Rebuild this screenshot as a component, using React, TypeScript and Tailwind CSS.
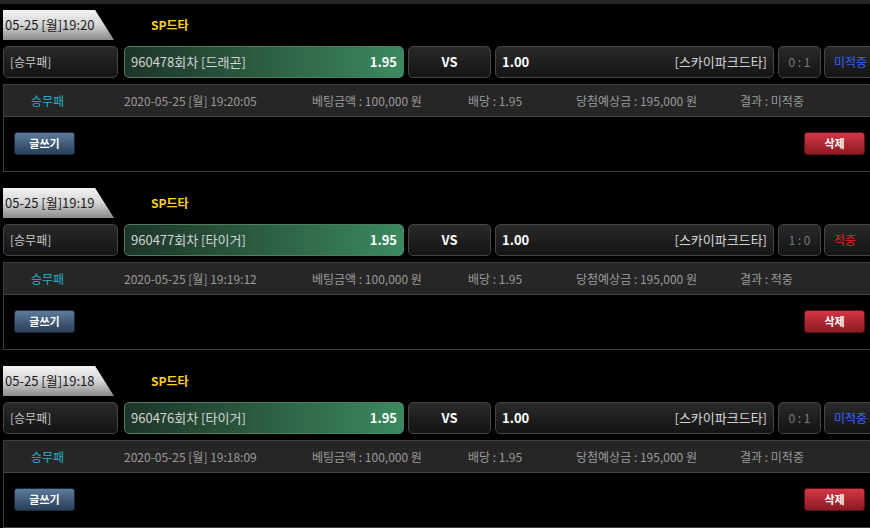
const bets = [
  { time: '19:20', round: '960478회차 [드래곤]', score: '0 : 1', win: false, at: '2020-05-25 [월] 19:20:05' },
  { time: '19:19', round: '960477회차 [타이거]', score: '1 : 0', win: true, at: '2020-05-25 [월] 19:19:12' },
  { time: '19:18', round: '960476회차 [타이거]', score: '0 : 1', win: false, at: '2020-05-25 [월] 19:18:09' },
]

const box = 'shrink-0 h-[32px] rounded-[5px] border border-[#464646] bg-linear-to-b from-[#2a2a2a] to-[#141414] flex items-center text-[12px]'

function BetCard({ b }: { b: (typeof bets)[number] }) {
  const result = b.win ? '적중' : '미적중'
  return (
    <div className="mb-[16px]">
      <div className="flex items-center h-[30px]">
        <div
          className="w-[111px] h-[30px] bg-linear-to-b from-[#f4f4f4] via-[#d4d4d4] to-[#8a8a8a] flex items-center pl-[2px] text-[13px] text-[#1a1a1a]"
          style={{ clipPath: 'polygon(0 0, 83% 0, 100% 100%, 0 100%)' }}
        >
          05-25 [월]{b.time}
        </div>
        <span className="ml-[37px] text-[12px] font-bold text-[#ffd21f]">SP드타</span>
      </div>

      <div className="flex mt-[6px]">
        <div className={`${box} w-[115px] pl-[6px] text-[#c8c8c8]`}>[승무패]</div>
        <div className="shrink-0 ml-[6px] w-[280px] h-[32px] rounded-[5px] border border-[#4f7d62] bg-linear-to-r from-[#1d3528] to-[#3b8a60] flex items-center justify-between px-[6px] text-[13px]">
          <span className="text-[#d4d4d4]">{b.round}</span>
          <span className="font-bold text-white">1.95</span>
        </div>
        <div className={`${box} ml-[4px] w-[83px] justify-center font-bold text-white text-[13px]`}>VS</div>
        <div className={`${box} ml-[4px] w-[279px] justify-between px-[6px] text-[13px]`}>
          <span className="font-bold text-white">1.00</span>
          <span className="text-[#d4d4d4]">[스카이파크드타]</span>
        </div>
        <div className={`${box} ml-[4px] w-[43px] justify-center text-[#7c7c7c]`}>{b.score}</div>
        <div className={`${box} ml-[3px] w-[60px] pl-[9px] ${b.win ? 'text-[#e82020]' : 'text-[#3563ff]'}`}>{result}</div>
      </div>

      <div className="mt-[6px] border border-r-0 border-[#3e3e3e]">
        <div className="h-[32px] bg-[#262626] border-b border-[#444] flex items-center text-[12px] text-[#9a9a9a]">
          <span className="w-[120px] pl-[27px] text-[#27b3c6]">승무패</span>
          <span className="w-[188px]">{b.at}</span>
          <span className="w-[156px]">베팅금액 : 100,000 원</span>
          <span className="w-[108px]">배당 : 1.95</span>
          <span className="w-[164px]">당첨예상금 : 195,000 원</span>
          <span>결과 : {result}</span>
        </div>
        <div className="flex justify-between items-center pl-[10px] pr-[13px] pt-[15px] pb-[16px]">
          <button className="w-[61px] h-[23px] rounded-[3px] border border-[#1b2a3c] bg-linear-to-b from-[#5d7c9c] to-[#2a3e58] text-white text-[11px] font-bold">
            글쓰기
          </button>
          <button className="w-[61px] h-[23px] rounded-[3px] border border-[#5a1018] bg-linear-to-b from-[#d43644] to-[#8c1b24] text-white text-[11px] font-bold">
            삭제
          </button>
        </div>
      </div>
    </div>
  )
}

export default function App() {
  return (
    <div className="w-[870px] h-[528px] overflow-hidden bg-black" style={{ fontFamily: '"Noto Sans CJK KR", "Noto Sans", sans-serif' }}>
      <div className="w-[878px]">
        <div className="h-[4px] bg-[#262626]" />
        <div className="pl-[3px] pt-[6px]">
          {bets.map((b) => (
            <BetCard key={b.time} b={b} />
          ))}
        </div>
      </div>
    </div>
  )
}
